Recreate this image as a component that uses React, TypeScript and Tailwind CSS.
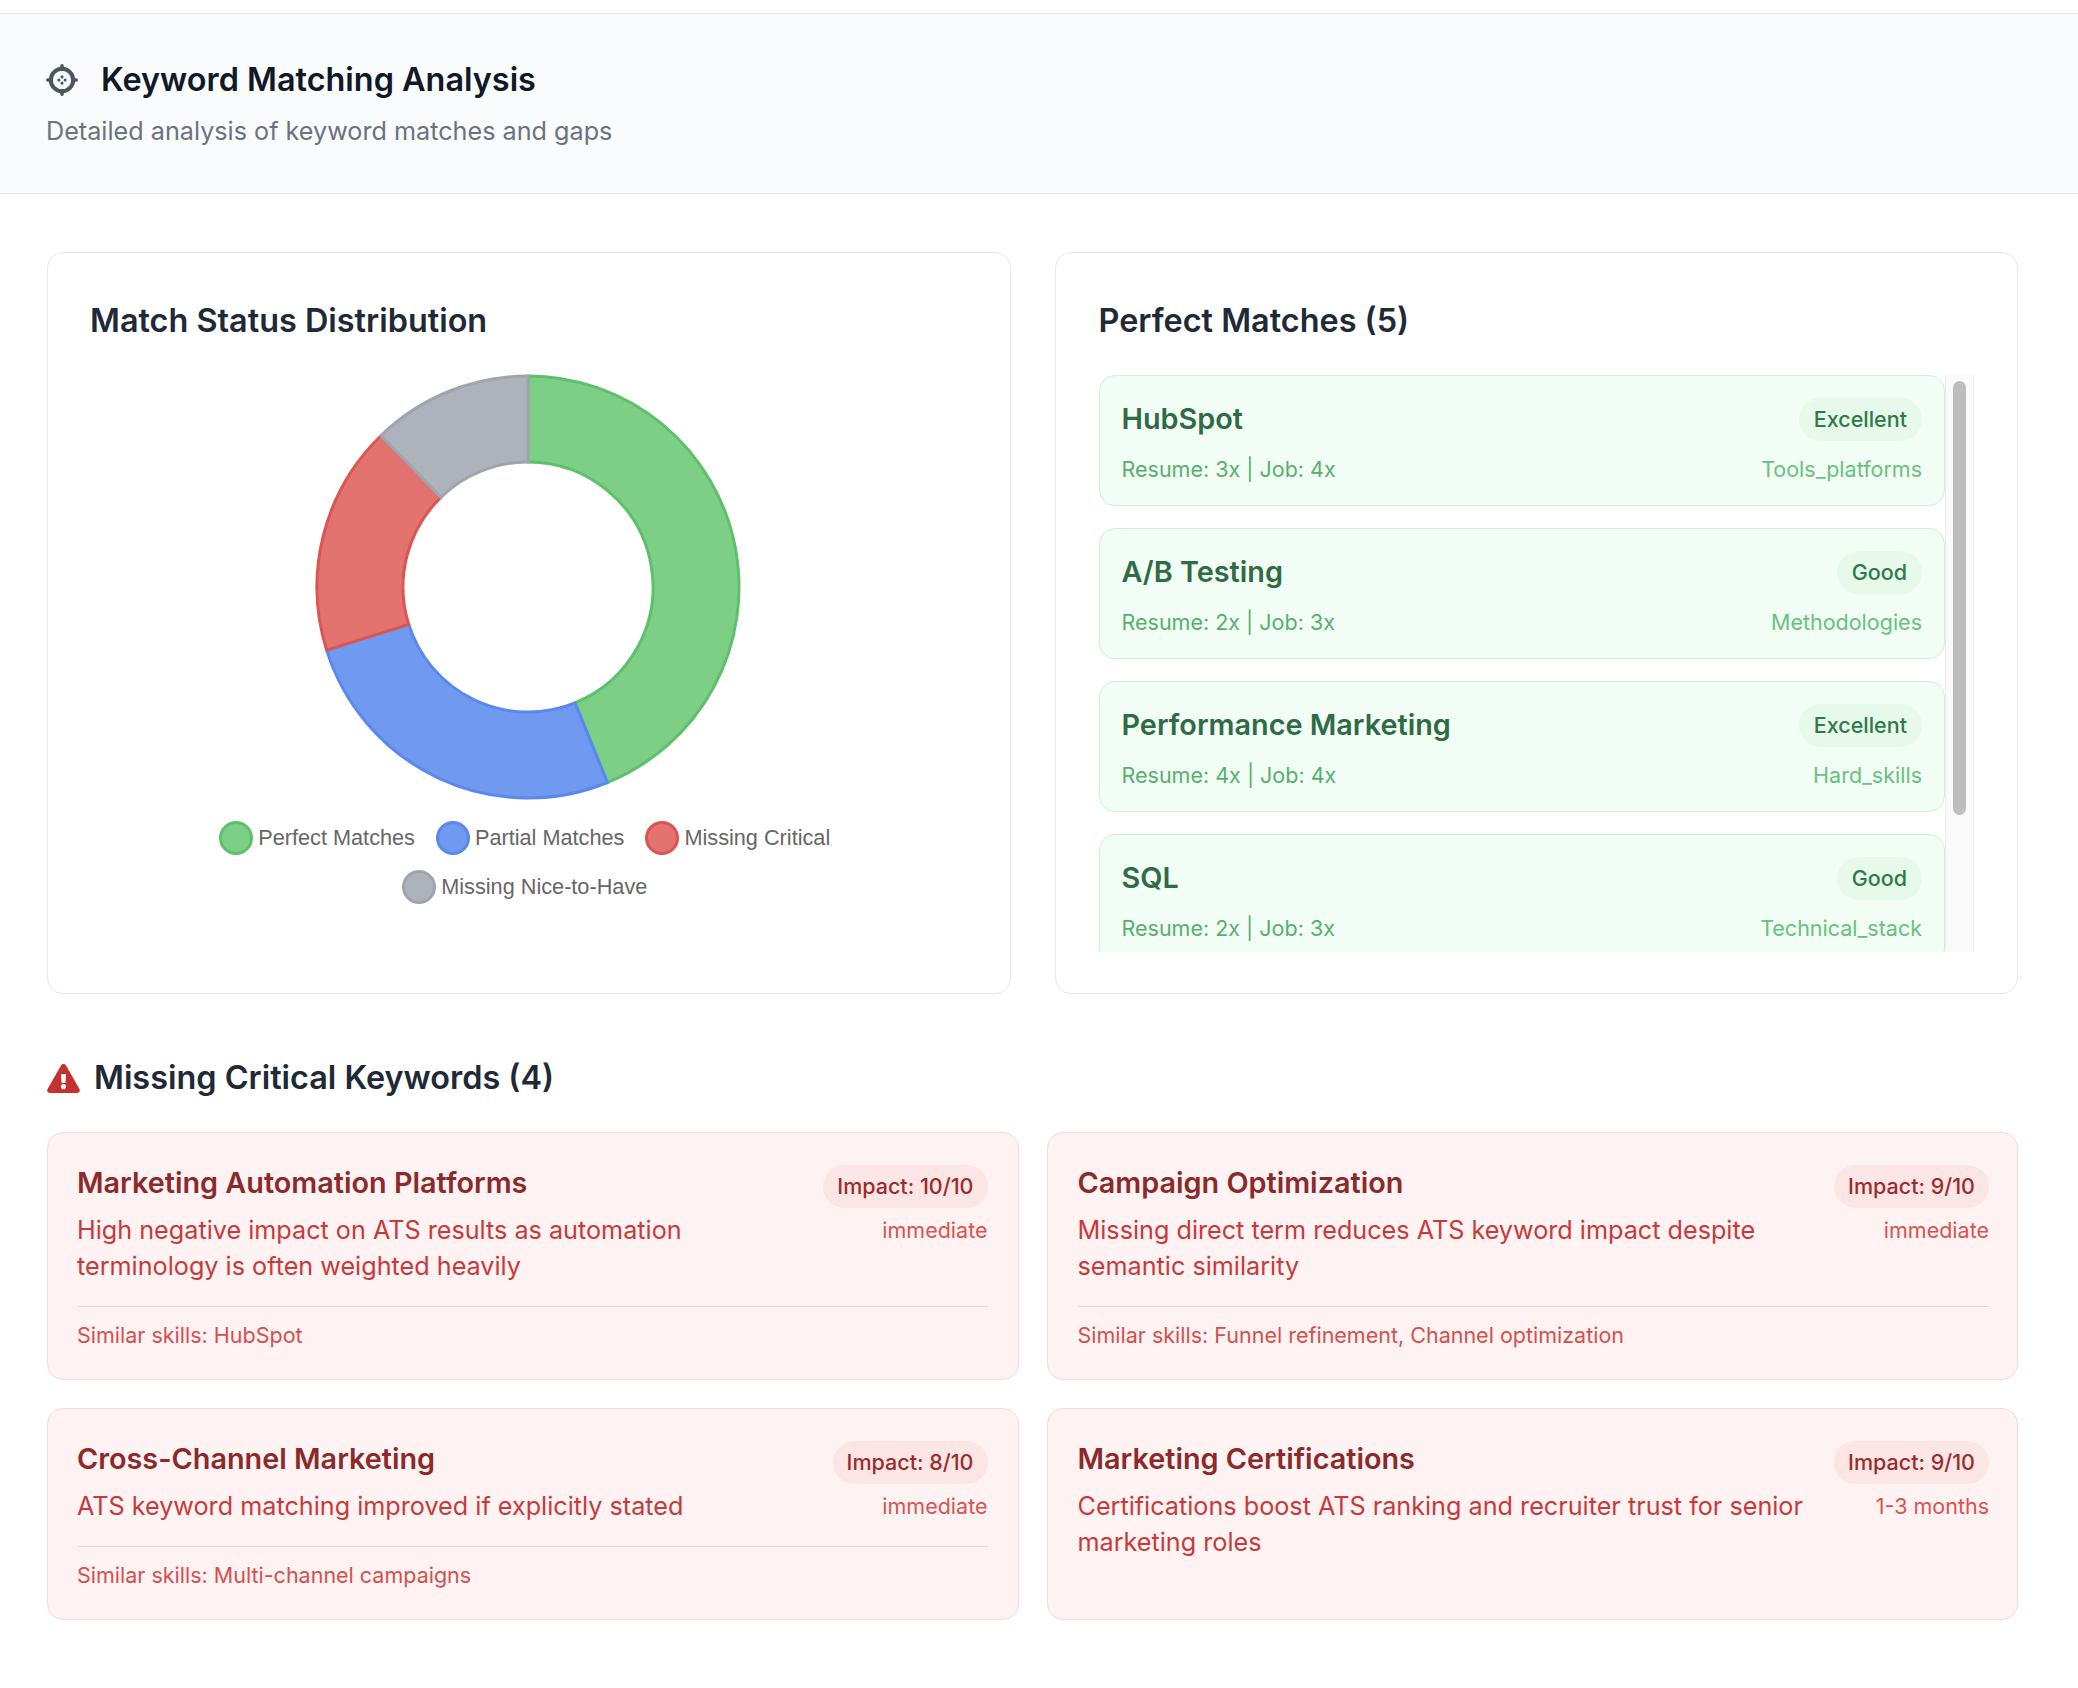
import { FaExclamationTriangle } from "react-icons/fa";

const perfect = [
  { name: "HubSpot", level: "Excellent", stats: "Resume: 3x | Job: 4x", category: "Tools_platforms" },
  { name: "A/B Testing", level: "Good", stats: "Resume: 2x | Job: 3x", category: "Methodologies" },
  { name: "Performance Marketing", level: "Excellent", stats: "Resume: 4x | Job: 4x", category: "Hard_skills" },
  { name: "SQL", level: "Good", stats: "Resume: 2x | Job: 3x", category: "Technical_stack" },
];

const missing = [
  {
    name: "Marketing Automation Platforms",
    impact: "Impact: 10/10",
    when: "immediate",
    text: "High negative impact on ATS results as automation terminology is often weighted heavily",
    similar: "Similar skills: HubSpot",
  },
  {
    name: "Campaign Optimization",
    impact: "Impact: 9/10",
    when: "immediate",
    text: "Missing direct term reduces ATS keyword impact despite semantic similarity",
    similar: "Similar skills: Funnel refinement, Channel optimization",
  },
  {
    name: "Cross-Channel Marketing",
    impact: "Impact: 8/10",
    when: "immediate",
    text: "ATS keyword matching improved if explicitly stated",
    similar: "Similar skills: Multi-channel campaigns",
  },
  {
    name: "Marketing Certifications",
    impact: "Impact: 9/10",
    when: "1-3 months",
    text: "Certifications boost ATS ranking and recruiter trust for senior marketing roles",
    similar: "",
  },
];

const slices = [
  { from: 0, to: 157.9, fill: "#7ccf85", stroke: "#5fc06c" },
  { from: 157.9, to: 252.6, fill: "#6f9af0", stroke: "#5b88ee" },
  { from: 252.6, to: 315.8, fill: "#e3736e", stroke: "#dc5550" },
  { from: 315.8, to: 360, fill: "#aeb2bb", stroke: "#9fa4af" },
];

function slicePath(from: number, to: number) {
  const c = 213;
  const outer = 211;
  const inner = 125;
  const pt = (r: number, a: number) => {
    const rad = (a * Math.PI) / 180;
    return `${(c + r * Math.sin(rad)).toFixed(2)} ${(c - r * Math.cos(rad)).toFixed(2)}`;
  };
  const large = to - from > 180 ? 1 : 0;
  return `M${pt(outer, from)} A${outer} ${outer} 0 ${large} 1 ${pt(outer, to)} L${pt(inner, to)} A${inner} ${inner} 0 ${large} 0 ${pt(inner, from)} Z`;
}

function TargetIcon() {
  return (
    <svg className="h-[32px] w-[32px] shrink-0" viewBox="0 0 32 32" fill="none" stroke="#4b5563" strokeLinecap="round">
      <circle cx="16" cy="16" r="11.2" strokeWidth="4" />
      <path d="M16 1.8v3.6M16 26.6v3.6M1.8 16h3.6M26.6 16h3.6" strokeWidth="3.6" />
      <path d="M16 12.8v.1M16 19.1v.1M12.8 16h.1M19.1 16h.1" strokeWidth="3" />
    </svg>
  );
}

function LegendItem({ label, fill, stroke }: { label: string; fill: string; stroke: string }) {
  return (
    <div className="flex items-center gap-[5px]">
      <span className="w-[34px] h-[34px] rounded-full border-[3px]" style={{ backgroundColor: fill, borderColor: stroke }} />
      <span className="text-[21.7px] leading-[34px] text-[#666666] font-['Liberation_Sans',sans-serif]">{label}</span>
    </div>
  );
}

function MatchCard({ item }: { item: (typeof perfect)[number] }) {
  return (
    <div className="h-[131px] shrink-0 rounded-[16px] border border-[#cdf0da] bg-[#f2fdf5] p-[22px]">
      <div className="flex items-start justify-between">
        <span className="text-[28.8px] leading-[41px] font-semibold text-[#2f6b45]">{item.name}</span>
        <span className="h-[43px] rounded-full bg-[#e6f9ea] px-[15px] text-[21.5px] leading-[43px] font-medium text-[#2f7a4a]">{item.level}</span>
      </div>
      <div className="mt-[12px] flex items-center justify-between text-[21.5px] leading-[32px]">
        <span className="text-[#56b06c]">{item.stats}</span>
        <span className="text-[#68c17c]">{item.category}</span>
      </div>
    </div>
  );
}

function MissingCard({ item }: { item: (typeof missing)[number] }) {
  return (
    <div className="rounded-[16px] border border-[#f8d7d9] bg-[#fef2f2] pl-[29px] pr-[30px] even:pl-[30px] even:pr-[28px] pt-[32px] pb-[28px]">
      <div className="flex gap-[22px]">
        <div className="flex-1 min-w-0">
          <div className="text-[28.8px] leading-[36px] font-semibold text-[#8b2a2a]">{item.name}</div>
          <p className="mt-[11px] text-[25.2px] leading-[36px] text-[#c73a3a]">{item.text}</p>
        </div>
        <div className="flex flex-col items-end shrink-0">
          <span className="h-[43px] rounded-full bg-[#fbe5e5] px-[14px] text-[21.5px] leading-[43px] font-medium text-[#9b2c2c]">{item.impact}</span>
          <span className="mt-[7px] text-[21.5px] leading-[30px] text-[#d9534f]">{item.when}</span>
        </div>
      </div>
      {item.similar && (
        <div className="mt-[22px] border-t border-[#f6cfd1] pt-[13px] pb-[1px] text-[21.5px] leading-[30px] text-[#d4504d]">{item.similar}</div>
      )}
    </div>
  );
}

export default function App() {
  return (
    <div className="min-h-[1688px] w-full bg-white pt-[13px] font-['Inter',sans-serif]">
      <header className="border-y border-[#e5e7eb] bg-[#f9fbfd] px-[46px] pt-[46px] pb-[46px]">
        <div className="flex items-center gap-[23px]">
          <TargetIcon />
          <h1 className="text-[32.4px] leading-[40px] font-semibold text-[#111827]">Keyword Matching Analysis</h1>
        </div>
        <p className="mt-[15px] text-[25.2px] leading-[32px] text-[#6b7280]">Detailed analysis of keyword matches and gaps</p>
      </header>

      <main className="pl-[47px] pr-[60px] pt-[58px]">
        <div className="grid grid-cols-2 gap-[44px]">
          <section className="h-[742px] rounded-[16px] border border-[#e5e7eb] bg-white pl-[42px] pr-[43px] pt-[48px]">
            <h2 className="text-[32.4px] leading-[40px] font-semibold text-[#1f2937]">Match Status Distribution</h2>
            <div className="mt-[33px] flex justify-center">
              <svg width="426" height="426" viewBox="0 0 426 426">
                {slices.map((s) => (
                  <path key={s.from} d={slicePath(s.from, s.to)} fill={s.fill} stroke={s.stroke} strokeWidth="3" />
                ))}
              </svg>
            </div>
            <div className="mx-auto mt-[21px] flex max-w-[660px] flex-wrap justify-center gap-x-[21px] gap-y-[15px] pr-[7px]">
              <LegendItem label="Perfect Matches" fill={slices[0].fill} stroke={slices[0].stroke} />
              <LegendItem label="Partial Matches" fill={slices[1].fill} stroke={slices[1].stroke} />
              <LegendItem label="Missing Critical" fill={slices[2].fill} stroke={slices[2].stroke} />
              <LegendItem label="Missing Nice-to-Have" fill={slices[3].fill} stroke={slices[3].stroke} />
            </div>
          </section>

          <section className="h-[742px] rounded-[16px] border border-[#e5e7eb] bg-white px-[43px] pt-[48px]">
            <h2 className="text-[32.4px] leading-[40px] font-semibold text-[#1f2937]">Perfect Matches (5)</h2>
            <div className="mt-[34px] flex h-[577px] overflow-hidden">
              <div className="flex min-w-0 flex-1 flex-col gap-[22px]">
                {perfect.map((p) => (
                  <MatchCard key={p.name} item={p} />
                ))}
              </div>
              <div className="w-[29px] shrink-0 border-x border-[#ebebeb] bg-[#fafafa] px-[7px] pt-[6px]">
                <div className="h-[434px] rounded-full bg-[#bdbdbd]" />
              </div>
            </div>
          </section>
        </div>

        <h2 className="mt-[64px] flex items-center gap-[14px] text-[32.4px] leading-[40px] font-semibold text-[#1f2937]">
          <FaExclamationTriangle className="w-[33px] h-[29px] text-[#c53030]" />
          Missing Critical Keywords (4)
        </h2>
        <div className="mt-[34px] grid grid-cols-2 gap-x-[28px] gap-y-[28px]">
          {missing.map((m) => (
            <MissingCard key={m.name} item={m} />
          ))}
        </div>
      </main>
    </div>
  );
}
